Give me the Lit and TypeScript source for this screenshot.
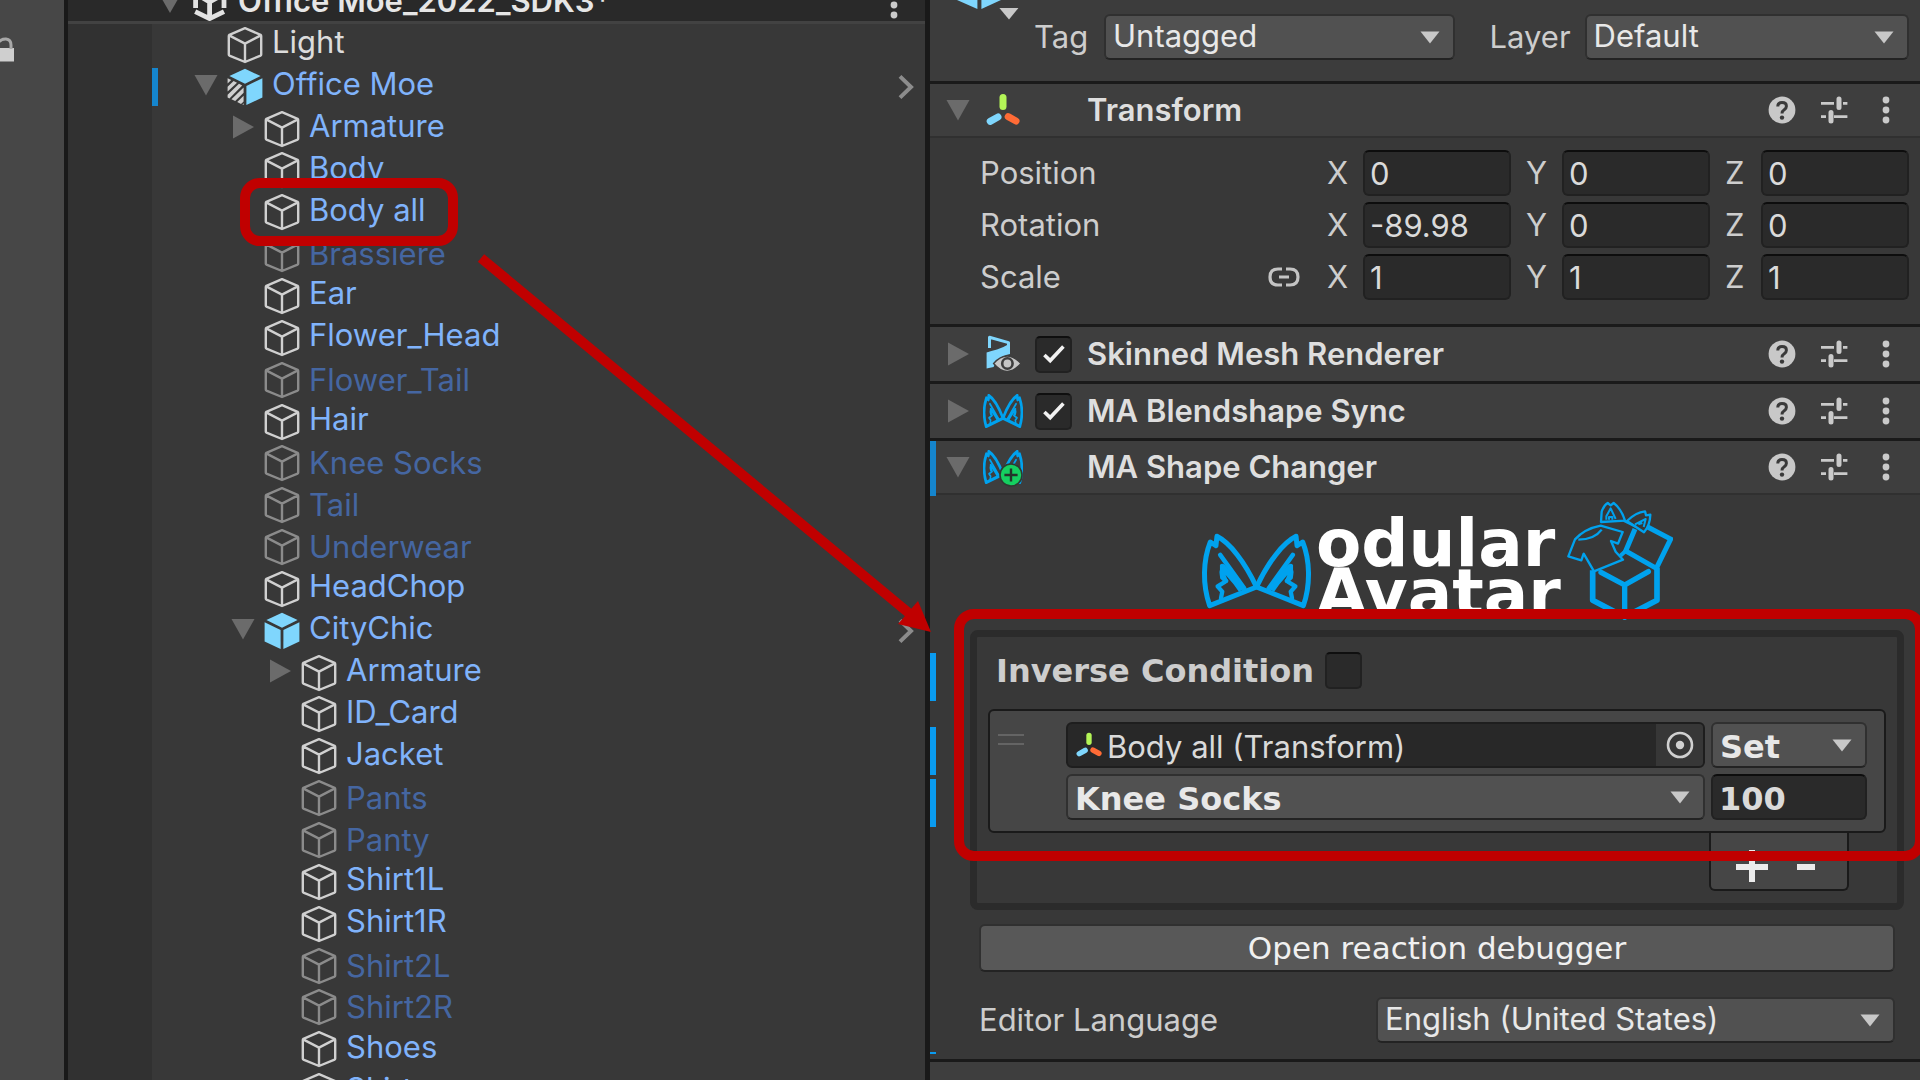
import { LitElement, html, svg, css, nothing } from "lit";
import { customElement, property } from "lit/decorators.js";
import { classMap } from "lit/directives/class-map.js";

type Fold = "open" | "closed" | "none";

interface TreeNode {
  name: string;
  level: number;
  tone: "plain" | "prefab" | "dim";
  fold?: Fold;
  icon?: "cube" | "prefab" | "variant";
}

const NODES: TreeNode[] = [
  { name: "Light", level: 0, tone: "plain" },
  { name: "Office Moe", level: 0, tone: "prefab", fold: "open", icon: "variant" },
  { name: "Armature", level: 1, tone: "prefab", fold: "closed" },
  { name: "Body", level: 1, tone: "prefab" },
  { name: "Body all", level: 1, tone: "prefab" },
  { name: "Brassiere", level: 1, tone: "dim" },
  { name: "Ear", level: 1, tone: "prefab" },
  { name: "Flower_Head", level: 1, tone: "prefab" },
  { name: "Flower_Tail", level: 1, tone: "dim" },
  { name: "Hair", level: 1, tone: "prefab" },
  { name: "Knee Socks", level: 1, tone: "dim" },
  { name: "Tail", level: 1, tone: "dim" },
  { name: "Underwear", level: 1, tone: "dim" },
  { name: "HeadChop", level: 1, tone: "prefab" },
  { name: "CityChic", level: 1, tone: "prefab", fold: "open", icon: "prefab" },
  { name: "Armature", level: 2, tone: "prefab", fold: "closed" },
  { name: "ID_Card", level: 2, tone: "prefab" },
  { name: "Jacket", level: 2, tone: "prefab" },
  { name: "Pants", level: 2, tone: "dim" },
  { name: "Panty", level: 2, tone: "dim" },
  { name: "Shirt1L", level: 2, tone: "prefab" },
  { name: "Shirt1R", level: 2, tone: "prefab" },
  { name: "Shirt2L", level: 2, tone: "dim" },
  { name: "Shirt2R", level: 2, tone: "dim" },
  { name: "Shoes", level: 2, tone: "prefab" },
  { name: "Skirt", level: 2, tone: "prefab" },
];

const foldIcon = (state: Fold) => html`
  <svg width="24" height="24" viewBox="0 0 24 24" aria-hidden="true">
    ${state === "open"
      ? svg`<path d="M0.5 2H23.5L12 22.5Z" fill="#6b6b6b" />`
      : svg`<path d="M2 0.5L23 12L2 23.5Z" fill="#6b6b6b" />`}
  </svg>
`;

const caret = html`
  <svg class="caret" width="20" height="13" viewBox="0 0 20 13" aria-hidden="true">
    <path d="M0.5 0.5H19.5L10 12.5Z" fill="#c8c8c8" />
  </svg>
`;

const dots = html`
  <svg width="8" height="28" viewBox="0 0 8 28" aria-hidden="true">
    <circle cx="4" cy="4" r="3.4" fill="#cacaca" />
    <circle cx="4" cy="14" r="3.4" fill="#cacaca" />
    <circle cx="4" cy="24" r="3.4" fill="#cacaca" />
  </svg>
`;

const cubeIcon = (kind: "cube" | "prefab" | "variant") => {
  if (kind === "cube") {
    return html`<svg class="obj" width="36" height="38" viewBox="0 0 36 38" aria-hidden="true">
      <path
        d="M18 2.2L33.6 8.8Q34.2 9.2 34.2 10V28.4Q34.2 29.2 33.6 29.6L18 36L2.4 29.6Q1.8 29.2 1.8 28.4V10Q1.8 9.2 2.4 8.8ZM2.6 9.6L18 17.6L33.4 9.6M18 17.6V36"
        fill="none" stroke="#d0d0d0" stroke-width="2.4" stroke-linejoin="round" />
    </svg>`;
  }
  return html`<svg class="obj" width="36" height="38" viewBox="0 0 36 38" aria-hidden="true">
    <path d="M18 0.8L33.6 8L18 15.8L2.4 8Z" fill="#7fd6fd" />
    <path d="M19.4 18L35.4 10.2V29.6L19.4 37Z" fill="#7fd6fd" />
    ${kind === "prefab"
      ? svg`<path d="M16.6 18L0.6 10.2V29.6L16.6 37Z" fill="#7fd6fd" />`
      : svg`
        <path d="M0.6 15.4V10.2L4.2 12ZM0.6 23.6V18.8L6.6 13L10 14.8ZM2.4 30.4L0.6 29.4V26.8L12 15.8L15.2 17.4ZM8.2 33L4.4 31.3L16.6 19.5V24.8ZM14 36L10.2 34.1L16.6 27.8V33.4ZM16.6 37L15.4 36.4L16.6 35.3Z"
          fill="#cfcfcf" />`}
  </svg>`;
};

const axesIcon = (size: number) => html`
  <svg width=${size} height=${size} viewBox="0 0 34 34" aria-hidden="true">
    <path d="M17 4.5V13.5" stroke="#b4f557" stroke-width="7" stroke-linecap="round" />
    <path d="M4.2 28.4L12 24" stroke="#7fd6fd" stroke-width="7" stroke-linecap="round" />
    <path d="M22.2 23.6L30 28" stroke="#ff6b36" stroke-width="7" stroke-linecap="round" />
  </svg>
`;

const earShape = (line: number) => svg`
  <path d="M60 348C38 285 40 212 62 157L79 168L82 140C122 160 166 218 201 292Z"
    fill="none" stroke="#00a2ee" stroke-width=${line} stroke-linejoin="round" />
  <path d="M92 196L164 296" stroke="#00a2ee" stroke-width="14" stroke-linecap="round" />
  <path d="M91 226Q97 218 106 226L168 296L148 306L132 284L108 256L114 270L106 284L91 258Z" fill="#00a2ee" />
  <path d="M96 246L98 264L110 274L84 290L98 306L94 326" fill="none" stroke="#00a2ee" stroke-width="13" stroke-linejoin="round" stroke-linecap="round" />
`;

const ears = (width: number, height: number, line: number) => html`
  <svg width=${width} height=${height} viewBox="34 130 334 228" preserveAspectRatio="none" aria-hidden="true">
    ${earShape(line)}
    <g transform="translate(402 0) scale(-1 1)">${earShape(line)}</g>
  </svg>
`;

const componentIcon = (kind: string) => {
  switch (kind) {
    case "axes":
      return axesIcon(34);
    case "mesh":
      return html`<svg width="36" height="40" viewBox="0 0 36 40" aria-hidden="true">
        <path d="M4.5 14V3.2L23.5 8.6V14" fill="none" stroke="#7fd6fd" stroke-width="3" stroke-linejoin="round" />
        <path d="M1.6 18.6Q6 17 12 15.4Q18 13.6 23 10.4L25 9V20Q17 21 10.4 29Q9.4 31 8.6 33L1.6 34.4Z" fill="#7fd6fd" />
        <path d="M8.6 29.5Q22 14.5 36 29.5Q22 45.5 8.6 29.5Z" fill="#c6c6c6" stroke="#3e3e3e" stroke-width="1.4" />
        <circle cx="22.4" cy="29.5" r="5.2" fill="#c6c6c6" stroke="#3e3e3e" stroke-width="2.6" />
      </svg>`;
    case "ears":
      return ears(40, 34, 22);
    default:
      return html`<span class="stack">
        ${ears(40, 34, 22)}
        <svg class="plus" width="24" height="24" viewBox="0 0 24 24" aria-hidden="true">
          <circle cx="12" cy="12" r="11" fill="#15d060" stroke="#2e3a32" stroke-width="1.6" />
          <path d="M12 5.4V18.6M5.4 12H18.6" stroke="#25352b" stroke-width="2.4" />
        </svg>
      </span>`;
  }
};

const check = html`
  <svg class="tick" width="24" height="20" viewBox="0 0 24 20" aria-hidden="true">
    <path d="M2.4 11L8.2 16.6L21.4 2.6" fill="none" stroke="#f2f2f2" stroke-width="3.6" />
  </svg>
`;

const controls = css`
  * {
    box-sizing: border-box;
  }
  svg {
    display: block;
    flex: none;
  }
  button,
  input,
  select {
    font: inherit;
    color: inherit;
    margin: 0;
    border-radius: 0;
    outline: none;
  }
  .bare {
    padding: 0;
    border: 0;
    background: none;
    flex: none;
  }
  .box {
    display: grid;
    place-items: center;
    width: 37px;
    height: 37px;
    flex: none;
  }
  .box > * {
    grid-area: 1 / 1;
  }
  .box input {
    appearance: none;
    width: 37px;
    height: 37px;
    background: #2a2a2a;
    border: 2px solid #212121;
    border-top-color: #0f0f0f;
    border-radius: 5px;
  }
  .tick {
    pointer-events: none;
  }
`;

@customElement("component-header")
export class ComponentHeader extends LitElement {
  @property() label = "";
  @property() icon = "axes";
  @property({ type: Boolean }) open = false;
  @property({ type: Boolean }) toggle = false;
  @property({ type: Boolean }) override = false;

  static styles = [
    controls,
    css`
      :host {
        display: block;
        border-top: 3px solid #1a1a1a;
        background: #3e3e3e;
      }
      .bar {
        position: relative;
        display: flex;
        align-items: center;
        height: 54px;
        padding: 0 30px 0 16px;
      }
      .open {
        border-bottom: 2px solid #303030;
      }
      .icon {
        display: flex;
        justify-content: center;
        width: 42px;
        margin-left: 12px;
      }
      .slot {
        width: 37px;
        margin: 0 15px 0 11px;
      }
      h2 {
        flex: 1;
        margin: 0;
        font-size: 31px;
        line-height: 40px;
        font-weight: 600;
        color: #dedede;
        white-space: nowrap;
      }
      .actions {
        display: flex;
        align-items: center;
        gap: 24px;
      }
      .actions button:last-child {
        margin-left: 10px;
      }
      .stack {
        position: relative;
      }
      .plus {
        position: absolute;
        left: 16px;
        top: 13px;
      }
      .mark {
        position: absolute;
        left: 0;
        top: 0;
        bottom: -3px;
        width: 6px;
        background: #1585cd;
      }
    `,
  ];

  render() {
    return html`
      <div class=${classMap({ bar: true, open: this.open })}>
        ${this.override ? html`<span class="mark"></span>` : nothing}
        <button class="bare" aria-label="Fold ${this.label}">${foldIcon(this.open ? "open" : "closed")}</button>
        <span class="icon">${componentIcon(this.icon)}</span>
        <span class="slot">
          ${this.toggle
            ? html`<span class="box"><input type="checkbox" checked aria-label="Enable ${this.label}" />${check}</span>`
            : nothing}
        </span>
        <h2>${this.label}</h2>
        <div class="actions">
          <button class="bare" aria-label="Help">
            <svg width="28" height="28" viewBox="0 0 28 28" aria-hidden="true">
              <circle cx="14" cy="14" r="13.4" fill="#c8c8c8" />
              <path d="M9.8 10.6Q9.8 6.6 14 6.6Q18.4 6.6 18.4 10.2Q18.4 12.2 16.2 13.8Q14 15.2 14 17.6" fill="none" stroke="#3a3a3a" stroke-width="3" />
              <circle cx="14" cy="21.6" r="2.2" fill="#3a3a3a" />
            </svg>
          </button>
          <button class="bare" aria-label="Presets">
            <svg width="28" height="28" viewBox="0 0 28 28" aria-hidden="true">
              <path d="M1 7.4H14M23 7.4H27.4M1 20.6H6M14 20.6H27.4" stroke="#cacaca" stroke-width="2.6" />
              <path d="M19 3V11.4M11 16.4V25" stroke="#cacaca" stroke-width="5" stroke-linecap="round" />
            </svg>
          </button>
          <button class="bare" aria-label="More">${dots}</button>
        </div>
      </div>
    `;
  }
}

@customElement("scene-hierarchy")
export class SceneHierarchy extends LitElement {
  static styles = [
    controls,
    css`
      :host {
        display: flex;
        flex-direction: column;
        min-width: 0;
        overflow: hidden;
        background: #383838;
      }
      .scene {
        display: flex;
        align-items: flex-end;
        height: 24px;
        flex: none;
        padding: 0 27px 0 90px;
        background: #292929;
        border-bottom: 3px solid #424242;
      }
      .scene svg {
        margin-right: 10px;
      }
      .scene strong {
        flex: 1;
        font-size: 31px;
        line-height: 40px;
        font-weight: 600;
        color: #e6e6e6;
      }
      .scene .more {
        margin: 0 -10px 2px 0;
      }
      .tree {
        flex: 1;
        display: grid;
        grid-auto-rows: 1fr;
        margin: 0 0 -32px;
        padding: 0;
        list-style: none;
        background: linear-gradient(90deg, #313131 84px, #383838 84px);
      }
      .row {
        position: relative;
        display: flex;
        align-items: center;
        padding: 0 11px 0 126px;
      }
      .level-1 {
        padding-left: 163px;
      }
      .level-2 {
        padding-left: 200px;
      }
      .fold {
        width: 24px;
        margin-right: 9px;
        flex: none;
      }
      .obj {
        margin-right: 9px;
      }
      .name {
        flex: 1;
        font-size: 31px;
        line-height: 36px;
        padding-bottom: 5px;
        white-space: nowrap;
      }
      .plain {
        color: #dcdcdc;
      }
      .prefab {
        color: #80b3fb;
      }
      .dim .name {
        color: #4566a1;
        padding-bottom: 0;
      }
      .dim .obj {
        opacity: 0.55;
      }
      .mark {
        position: absolute;
        left: 84px;
        top: 2px;
        bottom: 2px;
        width: 6px;
        background: #1585cd;
      }
    `,
  ];

  render() {
    return html`
      <header class="scene">
        <button class="bare" aria-label="Fold scene">
          <svg width="24" height="24" viewBox="0 0 24 24" aria-hidden="true"><path d="M0.5 -4H23.5L12 16Z" fill="#6b6b6b" /></svg>
        </button>
        <svg width="36" height="24" viewBox="0 0 36 24" aria-hidden="true">
          <path d="M3.6 -4V11M3.2 14.6L17.6 21.6L32 14.6M32 -4V11M17.6 2V19M17.6 5L6 -2M17.6 5L30 -2" fill="none" stroke="#e2e2e2" stroke-width="4.8" />
        </svg>
        <strong>Office Moe_2022_SDK3*</strong>
        <button class="bare more" aria-label="Scene menu">${dots}</button>
      </header>
      <ul class="tree" role="tree">
        ${NODES.map(
          (n) => html`
            <li class="row level-${n.level} ${n.tone}" role="treeitem">
              ${n.icon === "variant" ? html`<span class="mark"></span>` : nothing}
              <span class="fold">
                ${n.fold ? html`<button class="bare" aria-label="Fold ${n.name}">${foldIcon(n.fold)}</button>` : nothing}
              </span>
              ${cubeIcon(n.icon ?? "cube")}
              <span class="name">${n.name}</span>
              ${n.icon
                ? html`<button class="bare" aria-label="Open ${n.name}">
                    <svg width="16" height="26" viewBox="0 0 16 26" aria-hidden="true">
                      <path d="M2 2.4L13 13L2 23.6" fill="none" stroke="#8c8c8c" stroke-width="4" />
                    </svg>
                  </button>`
                : nothing}
            </li>
          `,
        )}
      </ul>
    `;
  }
}

@customElement("object-inspector")
export class ObjectInspector extends LitElement {
  static styles = [
    controls,
    css`
      :host {
        display: block;
        min-width: 0;
        overflow: hidden;
        background: #383838;
        color: #cdcdcd;
        font-size: 31px;
        line-height: 40px;
      }
      .object {
        display: flex;
        align-items: center;
        padding: 14px 11px 21px 24px;
        background: #3c3c3c;
      }
      .object .prefab {
        align-self: flex-start;
        margin: -14px 14px 0 0;
      }
      .tag {
        width: 70px;
      }
      .layer {
        width: 95px;
        margin-left: 35px;
      }
      .tag-select {
        flex: 350 1 0;
      }
      .layer-select {
        flex: 324 1 0;
      }
      .select {
        display: grid;
        align-items: center;
        min-width: 0;
      }
      .select > * {
        grid-area: 1 / 1;
      }
      .select select {
        appearance: none;
        width: 100%;
        height: 46px;
        padding: 0 40px 2px 7px;
        color: #e8e8e8;
        background: #515151;
        border: 2px solid #303030;
        border-bottom-color: #232323;
        border-radius: 6px;
      }
      .caret {
        justify-self: end;
        margin-right: 15px;
        pointer-events: none;
      }
      .field {
        flex: 1;
        width: 100%;
        min-width: 0;
        height: 46px;
        padding: 0 5px;
        color: #dadada;
        background: #2a2a2a;
        border: 2px solid #212121;
        border-top-color: #0d0d0d;
        border-radius: 6px;
      }
      .transform {
        display: grid;
        gap: 6px;
        padding: 12px 11px 24px 50px;
      }
      .vector {
        display: grid;
        grid-template-columns: 347fr 582fr;
        align-items: center;
      }
      .title {
        display: flex;
        align-items: center;
        justify-content: space-between;
        padding-right: 27px;
      }
      .axes {
        display: grid;
        grid-template-columns: repeat(3, 1fr);
        gap: 15px;
      }
      .axis {
        display: flex;
        align-items: center;
      }
      .axis label {
        width: 36px;
        flex: none;
      }
      .changer {
        position: relative;
        padding: 0 16px 16px 40px;
      }
      .logo {
        display: flex;
        justify-content: center;
        align-items: flex-start;
        height: 135px;
        padding-top: 6px;
        overflow: hidden;
      }
      .logo > svg:first-child {
        margin-top: 32px;
      }
      .wordmark {
        width: 255px;
        margin: 18px 0 0;
        padding-left: 4px;
        font: bold 66px/50px "DejaVu Sans", sans-serif;
        color: #fff;
      }
      .wordmark span {
        display: block;
      }
      .group {
        padding: 15px 11px 12px;
        border: 7px solid #2b2b2b;
        border-radius: 8px;
        font-family: "DejaVu Sans", sans-serif;
      }
      .inverse {
        display: flex;
        align-items: center;
        gap: 11px;
        height: 37px;
        padding-left: 8px;
        font-size: 32px;
        font-weight: bold;
      }
      .item {
        display: flex;
        margin-top: 20px;
        padding: 11px 17px 11px 8px;
        background: #464646;
        border: 2px solid #1a1a1a;
        border-radius: 6px;
      }
      .handle {
        width: 26px;
        height: 11px;
        margin: 12px 42px 0 0;
        border: solid #646464;
        border-width: 2px 0;
        flex: none;
      }
      .cells {
        flex: 1;
        display: grid;
        grid-template-columns: 1fr 156px;
        gap: 6px;
        font-size: 32px;
        font-weight: bold;
      }
      .reference {
        display: flex;
        align-items: center;
        height: 46px;
        padding-left: 8px;
        background: #282828;
        border: 2px solid #1e1e1e;
        border-radius: 6px;
        overflow: hidden;
      }
      .reference input {
        flex: 1;
        min-width: 0;
        padding: 3px 0 0 5px;
        border: 0;
        background: none;
        font: 400 31px/40px Inter, sans-serif;
        color: #dadada;
      }
      .pick {
        display: grid;
        place-items: center;
        align-self: stretch;
        width: 47px;
        background: #373737;
      }
      .cells select {
        padding-top: 3px;
        padding-bottom: 0;
      }
      .cells .field {
        padding: 3px 0 0 6px;
      }
      .footer {
        display: flex;
        justify-content: space-around;
        width: 140px;
        height: 58px;
        margin: 0 37px 0 auto;
        padding: 10px 14px 0;
        background: #464646;
        border: 2px solid #1a1a1a;
        border-top: 0;
        border-radius: 0 0 6px 6px;
      }
      .debug {
        display: block;
        width: calc(100% - 18px);
        height: 48px;
        margin: 14px 9px 25px;
        padding: 0;
        font-family: "DejaVu Sans", sans-serif;
        color: #f0f0f0;
        background: #585858;
        border: 2px solid #303030;
        border-bottom-color: #232323;
        border-radius: 6px;
      }
      .language {
        display: grid;
        grid-template-columns: 397fr 519fr;
        align-items: center;
        margin: 0 9px;
      }
      .mark {
        position: absolute;
        left: 0;
        width: 6px;
        height: 48px;
        background: #0a9bf0;
      }
      .mark-inverse {
        top: 158px;
      }
      .mark-object {
        top: 232px;
      }
      .mark-shape {
        top: 284px;
      }
      .mark-end {
        top: 557px;
        height: 2px;
      }
      .next {
        height: 40px;
        background: #3e3e3e;
        border-top: 3px solid #1a1a1a;
      }
    `,
  ];

  private select(id: string, value: string, cls = "") {
    return html`<span class="select ${cls}">
      <select id=${id} aria-label=${value}><option>${value}</option></select>
      ${caret}
    </span>`;
  }

  private vector(name: string, values: string[], linked = false) {
    return html`<div class="vector">
      <span class="title">
        ${name}
        ${linked
          ? html`<button class="bare" aria-label="Constrain proportions">
              <svg width="32" height="20" viewBox="0 0 32 20" aria-hidden="true">
                <path d="M14 2H10Q2 2 2 10Q2 18 10 18H14M18 2H22Q30 2 30 10Q30 18 22 18H18M11 10H21" fill="none" stroke="#c4c4c4" stroke-width="3.2" />
              </svg>
            </button>`
          : nothing}
      </span>
      <span class="axes">
        ${["X", "Y", "Z"].map(
          (axis, i) => html`<span class="axis">
            <label for="${name}-${axis}">${axis}</label>
            <input class="field" id="${name}-${axis}" type="text" .value=${values[i]} />
          </span>`,
        )}
      </span>
    </div>`;
  }

  render() {
    return html`
      <div class="object">
        <svg class="prefab" width="66" height="22" viewBox="0 0 66 22" aria-hidden="true">
          <path d="M0 -8L23.4 -2V9L3 0ZM27.4 9V-2L50 -8L47 0Z" fill="#7fd6fd" />
          <path d="M45.4 8H64.4L55 19.4Z" fill="#c8c8c8" />
        </svg>
        <label class="tag" for="tag">Tag</label>
        ${this.select("tag", "Untagged", "tag-select")}
        <label class="layer" for="layer">Layer</label>
        ${this.select("layer", "Default", "layer-select")}
      </div>

      <component-header label="Transform" icon="axes" open></component-header>
      <div class="transform">
        ${this.vector("Position", ["0", "0", "0"])}
        ${this.vector("Rotation", ["-89.98", "0", "0"])}
        ${this.vector("Scale", ["1", "1", "1"], true)}
      </div>

      <component-header label="Skinned Mesh Renderer" icon="mesh" toggle></component-header>
      <component-header label="MA Blendshape Sync" icon="ears" toggle></component-header>
      <component-header label="MA Shape Changer" icon="ears-plus" open override></component-header>

      <div class="changer">
        <span class="mark mark-inverse"></span>
        <span class="mark mark-object"></span>
        <span class="mark mark-shape"></span>
        <span class="mark mark-end"></span>

        <div class="logo">
          ${ears(111, 76, 15)}
          <p class="wordmark"><span>odular</span><span>Avatar</span></p>
          <svg width="106" height="119" viewBox="414 34 318 357" fill="none" stroke="#00a2ee" stroke-linejoin="round" aria-hidden="true">
            <path d="M516 97L518 66Q525 46 536 40L545 47L554 40Q576 56 588 93Z" stroke-width="7" />
            <path d="M532 90V80L545 56L560 88M540 90V82H550V90" stroke-width="6" />
            <path d="M594 94Q620 68 648 65L651 77L664 75Q663 106 645 128L630 118Z" stroke-width="7" />
            <path d="M618 104L650 88L644 112M628 104L640 100" stroke-width="6" />
            <path d="M584 93L622 112" stroke-width="7" />
            <path d="M418 200L438 149Q468 117 515 108L581 127L567 162L546 154L560 186L582 210L495 245L464 192L457 212Z" stroke-width="7" />
            <path d="M448 150Q496 150 518 120" stroke-width="7" />
            <path d="M618 118L590 184L682 236L725 148L656 112" stroke-width="15" stroke-linejoin="miter" />
            <path d="M574 198L590 184" stroke-width="12" />
            <path d="M491 242V332L587 382L684 332V234" stroke-width="17" />
            <path d="M587 382V286M516 248L587 286L658 246" stroke-width="16" stroke-linecap="round" />
          </svg>
        </div>

        <div class="group">
          <div class="inverse">
            <label for="inverse">Inverse Condition</label>
            <span class="box"><input id="inverse" type="checkbox" /></span>
          </div>
          <div class="item">
            <span class="handle"></span>
            <div class="cells">
              <div class="reference">
                ${axesIcon(26)}
                <input type="text" readonly aria-label="Target object" value="Body all (Transform)" />
                <button class="bare pick" aria-label="Pick object">
                  <svg width="28" height="28" viewBox="0 0 28 28" aria-hidden="true">
                    <circle cx="14" cy="14" r="12" fill="none" stroke="#d0d0d0" stroke-width="2.6" />
                    <circle cx="14" cy="14" r="4.2" fill="#d0d0d0" />
                  </svg>
                </button>
              </div>
              ${this.select("mode", "Set")}
              ${this.select("shape", "Knee Socks")}
              <input class="field" type="text" aria-label="Shape value" value="100" />
            </div>
          </div>
          <div class="footer">
            <button class="bare" aria-label="Add">
              <svg width="34" height="34" viewBox="0 0 34 34" aria-hidden="true">
                <path d="M17 1V33M1 18H33" stroke="#ececec" stroke-width="6" />
              </svg>
            </button>
            <button class="bare" aria-label="Remove">
              <svg width="34" height="34" viewBox="0 0 34 34" aria-hidden="true">
                <path d="M8 18H26" stroke="#ececec" stroke-width="6" />
              </svg>
            </button>
          </div>
        </div>

        <button class="debug">Open reaction debugger</button>

        <div class="language">
          <label for="language">Editor Language</label>
          ${this.select("language", "English (United States)")}
        </div>
      </div>
      <div class="next"></div>
    `;
  }
}

@customElement("app-root")
export class AppRoot extends LitElement {
  static styles = css`
    :host {
      position: relative;
      display: grid;
      grid-template-columns: 64px minmax(0, 866fr) minmax(0, 990fr);
      height: 100vh;
      overflow: hidden;
      font-family: Inter, sans-serif;
      background: #191919;
    }
    .rail {
      padding-top: 37px;
      background: #474747;
    }
    .rail svg {
      display: block;
    }
    scene-hierarchy {
      border-left: 4px solid #191919;
      border-right: 5px solid #191919;
    }
    .callout {
      position: absolute;
      box-sizing: border-box;
      border: 10px solid #c00000;
      border-radius: 20px;
      pointer-events: none;
    }
    .source {
      left: 240px;
      top: 178px;
      width: 218px;
      height: 68px;
    }
    .target {
      left: 954px;
      top: 609px;
      right: -5px;
      height: 252px;
    }
    .pointer {
      position: absolute;
      left: 470px;
      top: 245px;
      pointer-events: none;
    }
  `;

  render() {
    return html`
      <aside class="rail">
        <svg width="16" height="26" viewBox="0 0 16 26" aria-hidden="true">
          <path d="M-2 11H14V24.5H-2Z" fill="#cfcfcf" />
          <path d="M-1 4.6Q2 1.8 6 2Q11 2.6 11 8V12" fill="none" stroke="#a8a8a8" stroke-width="3" />
        </svg>
      </aside>
      <scene-hierarchy></scene-hierarchy>
      <object-inspector></object-inspector>
      <span class="callout source"></span>
      <span class="callout target"></span>
      <svg class="pointer" width="470" height="395" viewBox="0 0 470 395" aria-hidden="true">
        <path d="M11 13L440 369" stroke="#c00000" stroke-width="10" />
        <path d="M448 356L461 387L428 379Z" fill="#c00000" />
      </svg>
    `;
  }
}
